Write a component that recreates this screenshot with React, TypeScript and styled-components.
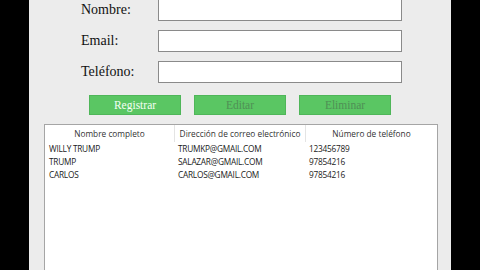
import React from 'react';
import styled, { createGlobalStyle } from 'styled-components';

const GlobalStyle = createGlobalStyle`
  html, body {
    margin: 0;
    padding: 0;
    background: #000;
    overflow: hidden;
  }
`;

const Screen = styled.div`
  width: 480px;
  height: 270px;
  display: flex;
  background: #000;
`;

const Panel = styled.div`
  margin-left: 29px;
  width: 422px;
  height: 270px;
  background: #ececec;
  display: flex;
  flex-direction: column;
  overflow: hidden;
`;

const Form = styled.div`
  display: grid;
  grid-template-columns: 77px 244px;
  grid-auto-rows: 22px;
  row-gap: 9px;
  margin-top: -1px;
  padding-left: 52px;
`;

const Label = styled.label`
  display: flex;
  align-items: center;
  font-family: 'Liberation Serif', serif;
  font-size: 14px;
  color: #111;
`;

const Input = styled.input`
  box-sizing: border-box;
  width: 244px;
  height: 22px;
  margin: 0;
  border: 1px solid #8a8a8a;
  background: #fff;
  outline: none;
`;

const Actions = styled.div`
  display: flex;
  gap: 13px;
  margin-top: 12px;
  padding-left: 60px;
`;

const Button = styled.button<{ $active?: boolean }>`
  box-sizing: border-box;
  width: 92px;
  height: 20px;
  padding: 0;
  border: 1px solid #4fb659;
  background: #5ac663;
  color: ${(p) => (p.$active ? '#f4fff4' : '#4f8f55')};
  font-family: 'Liberation Serif', serif;
  font-size: 11.5px;
  cursor: pointer;
`;

const Table = styled.div`
  box-sizing: border-box;
  margin: 9px 0 0 15px;
  width: 394px;
  flex: 1;
  background: #fff;
  border: 1px solid #a5a5a5;
  border-bottom: none;
  font-family: 'Open Sans', sans-serif;
  font-size: 8.3px;
  color: #1a1a1a;
`;

const Row = styled.div<{ $head?: boolean }>`
  display: grid;
  grid-template-columns: 129px 131px 1fr;
  height: ${(p) => (p.$head ? '17px' : '13px')};
  align-items: center;
`;

const HeadCell = styled.div`
  height: 100%;
  display: flex;
  align-items: center;
  justify-content: center;
  color: #333;
  & + & {
    border-left: 1px solid #e4e4e4;
  }
`;

const Cell = styled.div`
  padding-left: 4px;
  letter-spacing: -0.25px;
  white-space: nowrap;
`;

const rows = [
  ['WILLY TRUMP', 'TRUMKP@GMAIL.COM', '123456789'],
  ['TRUMP', 'SALAZAR@GMAIL.COM', '97854216'],
  ['CARLOS', 'CARLOS@GMAIL.COM', '97854216'],
];

const App: React.FC = () => {
  return (
    <>
      <GlobalStyle />
      <Screen>
        <Panel>
          <Form>
            <Label>Nombre:</Label>
            <Input />
            <Label>Email:</Label>
            <Input />
            <Label>Teléfono:</Label>
            <Input />
          </Form>
          <Actions>
            <Button $active>Registrar</Button>
            <Button>Editar</Button>
            <Button>Eliminar</Button>
          </Actions>
          <Table>
            <Row $head>
              <HeadCell>Nombre completo</HeadCell>
              <HeadCell>Dirección de correo electrónico</HeadCell>
              <HeadCell>Número de teléfono</HeadCell>
            </Row>
            {rows.map((r) => (
              <Row key={r[1]}>
                {r.map((c, i) => (
                  <Cell key={i}>{c}</Cell>
                ))}
              </Row>
            ))}
          </Table>
        </Panel>
      </Screen>
    </>
  );
};

export default App;
